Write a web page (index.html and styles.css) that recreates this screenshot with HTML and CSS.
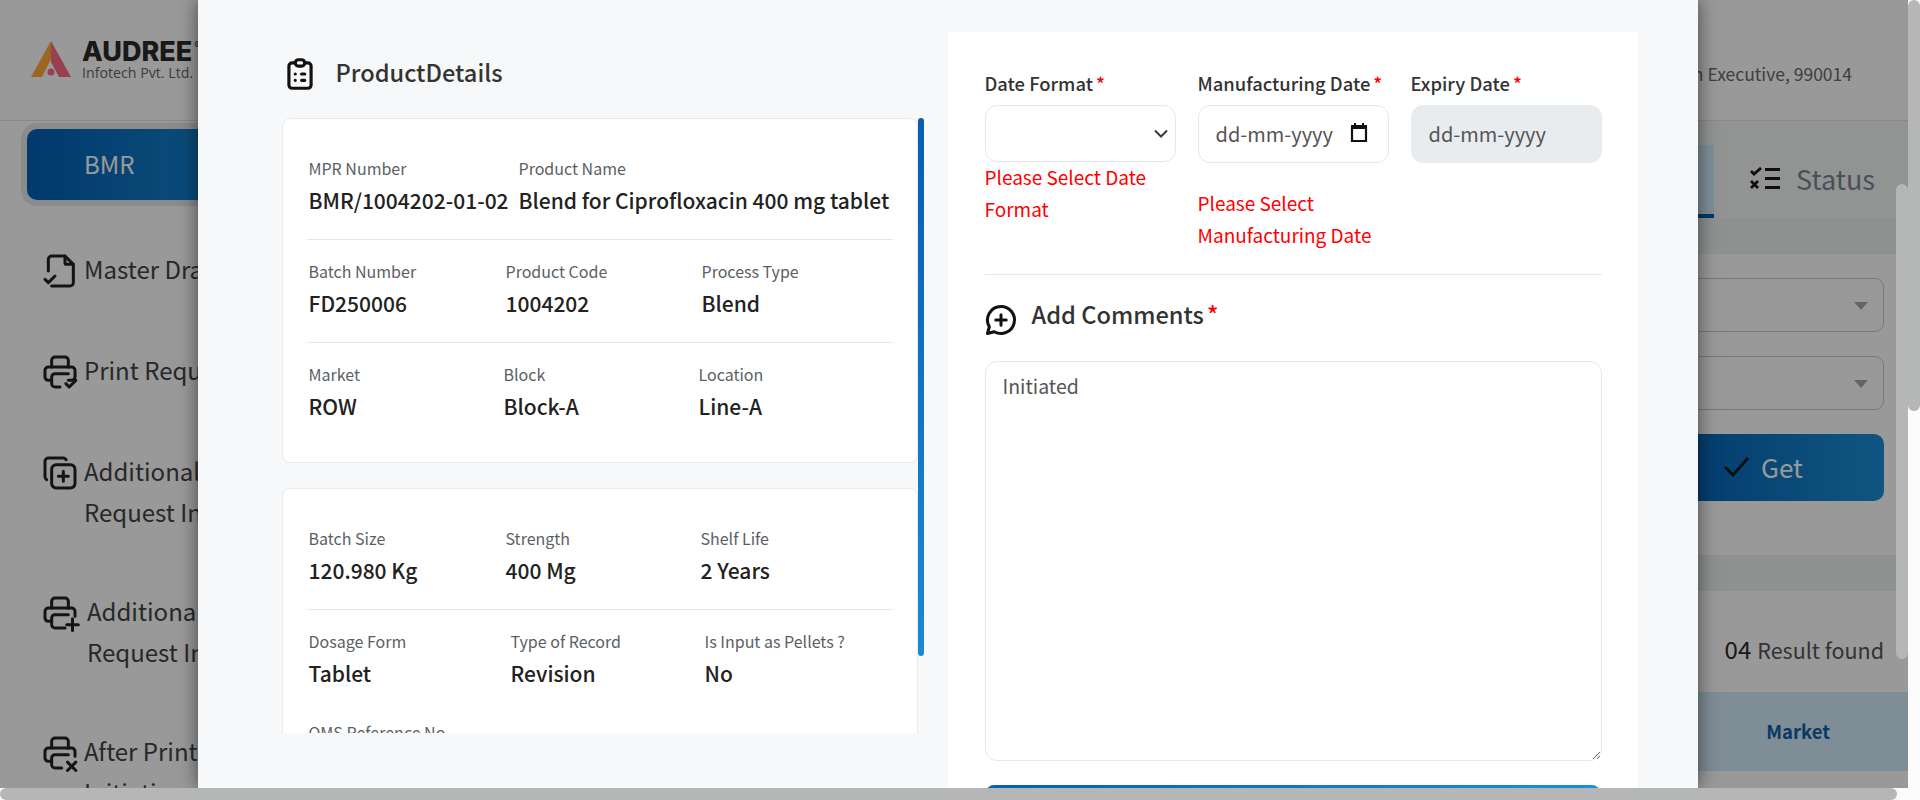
FILE: index.html
```html
<!DOCTYPE html>
<html lang="en">
<head>
  <meta charset="UTF-8">
  <meta name="viewport" content="width=device-width, initial-scale=1.0">
  <title>ProductDetails</title>
  <link rel="stylesheet" href="styles.css">
</head>
<body>
  <div class="page">
    <header class="topbar">
      <div class="logo">
        <svg class="logo-mark" width="42" height="38" viewBox="0 0 42 38">
          <polygon points="21,0 41,36 29,36 21,21" fill="#ff6c85"/>
          <polygon points="21,0 1,36 12,36 21,18" fill="#ffaa3c"/>
          <circle cx="21" cy="31" r="3.500" fill="#ff6c85"/>
        </svg>
        <div class="logo-text">
          <span class="logo-name">AUDREE<sup>®</sup></span>
          <span class="logo-sub">Infotech Pvt. Ltd.</span>
        </div>
      </div>
      <div class="user">Production Executive, 990014</div>
    </header>

    <div class="content">
      <nav class="sidebar">
        <div class="bmr-wrap"><button class="bmr">BMR</button></div>
        <div class="side-item">
          <svg class="side-icon" viewBox="0 0 24 24"><path d="M5 12V5a2 2 0 0 1 2-2h8l5 5v11a2 2 0 0 1-2 2H7"/><path d="M15 3v4a1 1 0 0 0 1 1h4"/><path d="M3 17l2 2 4-4"/></svg>
          <span>Master Draft</span>
        </div>
        <div class="side-item">
          <svg class="side-icon" viewBox="0 0 24 24"><path d="M17 17h2a2 2 0 0 0 2-2v-4a2 2 0 0 0-2-2H5a2 2 0 0 0-2 2v4a2 2 0 0 0 2 2h2"/><path d="M17 9V5a2 2 0 0 0-2-2H9a2 2 0 0 0-2 2v4"/><path d="M12 21H9a2 2 0 0 1-2-2v-4a2 2 0 0 1 2-2h8"/><path d="M15.500 19l2 2 4-4"/></svg>
          <span>Print Request</span>
        </div>
        <div class="side-item two-line">
          <svg class="side-icon" viewBox="0 0 24 24"><path d="M7 9.700A2.700 2.700 0 0 1 9.700 7h8.600A2.700 2.700 0 0 1 21 9.700v8.600a2.700 2.700 0 0 1-2.700 2.700H9.700A2.700 2.700 0 0 1 7 18.300z"/><path d="M4 16a2 2 0 0 1-1-1.700V5a2 2 0 0 1 2-2h9c.8 0 1.200.4 1.700 1"/><path d="M11 14h6M14 11v6"/></svg>
          <span>Additional Print<br>Request Initiation</span>
        </div>
        <div class="side-item two-line shifted">
          <svg class="side-icon" viewBox="0 0 24 24"><path d="M17 9H5a2 2 0 0 0-2 2v4a2 2 0 0 0 2 2h2"/><path d="M17 9h2a2 2 0 0 1 2 2v3"/><path d="M17 9V5a2 2 0 0 0-2-2H9a2 2 0 0 0-2 2v4"/><path d="M15 21H9a2 2 0 0 1-2-2v-4a2 2 0 0 1 2-2h8"/><path d="M16 19h7M19.500 15.500v7"/></svg>
          <span>Additional Print<br>Request Initiation</span>
        </div>
        <div class="side-item two-line">
          <svg class="side-icon" viewBox="0 0 24 24"><path d="M17 9H5a2 2 0 0 0-2 2v4a2 2 0 0 0 2 2h2"/><path d="M17 9h2a2 2 0 0 1 2 2v3"/><path d="M17 9V5a2 2 0 0 0-2-2H9a2 2 0 0 0-2 2v4"/><path d="M13 21H9a2 2 0 0 1-2-2v-4a2 2 0 0 1 2-2h8"/><path d="M16.500 17.500l5 5M21.500 17.500l-5 5"/></svg>
          <span>After Print<br>Initiation</span>
        </div>
      </nav>

      <main class="main">
        <div class="tabs">
          <div class="tab active">Initiation</div>
          <div class="tab">
            <svg class="status-icon" width="30" height="23" viewBox="0 0 30 23"><path d="M1 4l3 3 7-6M1 14l7 7M8 14l-7 7M15 2.500h15M15 11.500h15M15 20.500h15"/></svg>
            <span>Status</span>
          </div>
        </div>
        <div class="band"></div>
        <div class="filters">
          <div class="select-box"><i class="caret"></i></div>
          <div class="select-box"><i class="caret"></i></div>
          <button class="get">
            <svg width="27" height="21" viewBox="0 0 27 21"><path d="M2 11l8 8L25 2"/></svg>
            <span>Get</span>
          </button>
        </div>
        <div class="band"></div>
        <div class="result"><b>04</b> Result found</div>
        <div class="table-head"><span>Market</span></div>
      </main>
    </div>

    <div class="backdrop"></div>

    <section class="modal">
      <div class="details">
        <h2 class="details-title">
          <svg width="38" height="38" viewBox="0 0 24 24"><path d="M9 5H7a2 2 0 0 0-2 2v12a2 2 0 0 0 2 2h10a2 2 0 0 0 2-2V7a2 2 0 0 0-2-2h-2"/><path d="M9 5a2 2 0 0 1 2-2h2a2 2 0 0 1 2 2 2 2 0 0 1-2 2h-2a2 2 0 0 1-2-2z"/><path d="M9 12h.01M13 12h2M9 16h.01M13 16h2"/></svg>
          <span>ProductDetails</span>
        </h2>
        <div class="scroll-area">
          <div class="thumb"></div>
          <div class="card">
            <div class="row row-first">
              <div class="cell"><label>MPR Number</label><strong>BMR/1004202-01-02</strong></div>
              <div class="cell"><label>Product Name</label><strong>Blend for Ciprofloxacin 400 mg tablet</strong></div>
            </div>
            <div class="row cols-a">
              <div class="cell"><label>Batch Number</label><strong>FD250006</strong></div>
              <div class="cell"><label>Product Code</label><strong>1004202</strong></div>
              <div class="cell"><label>Process Type</label><strong>Blend</strong></div>
            </div>
            <div class="row cols-b no-line">
              <div class="cell"><label>Market</label><strong>ROW</strong></div>
              <div class="cell"><label>Block</label><strong>Block-A</strong></div>
              <div class="cell"><label>Location</label><strong>Line-A</strong></div>
            </div>
          </div>
          <div class="card">
            <div class="row cols-c">
              <div class="cell"><label>Batch Size</label><strong>120.980 Kg</strong></div>
              <div class="cell"><label>Strength</label><strong>400 Mg</strong></div>
              <div class="cell"><label>Shelf Life</label><strong>2 Years</strong></div>
            </div>
            <div class="row cols-d no-line row-short">
              <div class="cell"><label>Dosage Form</label><strong>Tablet</strong></div>
              <div class="cell"><label>Type of Record</label><strong>Revision</strong></div>
              <div class="cell"><label>Is Input as Pellets ?</label><strong>No</strong></div>
            </div>
            <div class="row no-line">
              <div class="cell"><label>QMS Reference No</label><strong>NA</strong></div>
            </div>
          </div>
        </div>
      </div>

      <div class="panel">
        <div class="date-grid">
          <div class="field">
            <label>Date Format<em>*</em></label>
            <select class="control"><option></option></select>
            <p class="error error-near">Please Select Date Format</p>
          </div>
          <div class="field">
            <label>Manufacturing Date<em>*</em></label>
            <div class="control date-box">
              <span>dd-mm-yyyy</span>
              <svg width="18" height="20" viewBox="0 0 18 20"><path d="M2 5h14v13H2z" fill="none" stroke="#111" stroke-width="2.200"/><path d="M1 2h16v4H1zM4 0h2v3H4zM12 0h2v3h-2z" fill="#111"/></svg>
            </div>
            <p class="error">Please Select Manufacturing Date</p>
          </div>
          <div class="field">
            <label>Expiry Date<em>*</em></label>
            <div class="control date-box disabled"><span>dd-mm-yyyy</span></div>
          </div>
        </div>
        <div class="comments-title">
          <svg width="36" height="36" viewBox="0 0 24 24"><path d="M12 3a9 9 0 1 1-4.500 16.800L3 21l1.200-4.500A9 9 0 0 1 12 3z"/><path d="M8.500 12h7M12 8.500v7"/></svg>
          <span>Add Comments<em>*</em></span>
        </div>
        <textarea class="comments">Initiated</textarea>
        <button class="submit">Submit</button>
      </div>
    </section>

    <div class="bar-inner"></div>
  </div>
  <div class="bar-right"></div>
  <div class="bar-bottom"></div>
</body>
</html>
```
FILE: styles.css
```css
* {
  margin: 0;
  padding: 0;
  box-sizing: border-box;
}

:root {
  --brand: linear-gradient(90deg, #0360b5, #1b8fd8);
  --thumb: #b5b7b6;
}

html, body {
  height: 800px;
  overflow: hidden;
}

body {
  position: relative;
  background: #fbfbfb;
  font-family: "Noto Sans CJK JP", "Noto Sans", sans-serif;
  color: #444;
}

button {
  font: inherit;
  border: 0;
}

.page {
  position: relative;
  width: 1908px;
  height: 788px;
  overflow: hidden;
  background: #fff;
}

/* page behind the dialog */
.topbar {
  display: flex;
  align-items: center;
  justify-content: space-between;
  height: 121px;
  padding: 0 56px 0 30px;
  border-bottom: 1px solid #e4e4e4;
}

.logo {
  display: flex;
  align-items: center;
  gap: 10px;
}

.logo-text {
  display: flex;
  flex-direction: column;
  font-family: Inter, sans-serif;
}

.logo-name {
  font-size: 27px;
  line-height: 26px;
  font-weight: 800;
  color: #2a2a2a;
}

.logo-name sup {
  margin-left: 2px;
  font-size: 10px;
  font-weight: 400;
  line-height: 0;
  vertical-align: 12px;
}

.logo-sub {
  font-family: "Open Sans", sans-serif;
  font-size: 14.200px;
  line-height: 16px;
  color: #666;
}

.user {
  margin-top: 26px;
  font-size: 17.500px;
  color: #6a6a6a;
}

.content {
  display: flex;
}

.sidebar {
  flex: none;
  width: 330px;
  padding: 8px 0 0 27px;
}

.bmr-wrap {
  width: 260px;
  margin-bottom: 49px;
}

.bmr {
  display: block;
  width: 100%;
  height: 71px;
  padding: 0 0 2px 57px;
  border-radius: 10px;
  background: var(--brand);
  box-shadow: 0 0 0 6px #e6e8ec;
  color: #fff;
  font-size: 24px;
  text-align: left;
}

.side-item {
  display: flex;
  align-items: flex-start;
  gap: 10px;
  margin-bottom: 59px;
  font-size: 24px;
  line-height: 40px;
  color: #444;
}

.side-item.two-line {
  line-height: 40.500px;
}

.side-item.shifted span {
  margin-left: 3px;
}

.side-icon {
  flex: none;
  width: 40px;
  height: 40px;
  margin: 2px -6px 0 13px;
  fill: none;
  stroke: #222;
  stroke-width: 1.800;
  stroke-linecap: round;
  stroke-linejoin: round;
}

.main {
  flex: 1;
  min-width: 0;
}

.tabs {
  display: flex;
  justify-content: flex-end;
  height: 97px;
  padding-top: 24px;
  background: #f3f5f5;
}

.tab {
  display: flex;
  align-items: center;
  gap: 16px;
  height: 73px;
  padding: 0 33px 6px 36px;
  font-size: 27px;
  color: #7b8591;
}

.tab.active {
  justify-content: center;
  width: 300px;
  background: #d2eeff;
  border-bottom: 4px solid #0360b5;
  color: #0360b5;
}

.status-icon path {
  fill: none;
  stroke: #1a1a1a;
  stroke-width: 2.800;
}

.band {
  height: 36px;
  background: #eef0f0;
}

.filters {
  display: flex;
  flex-direction: column;
  align-items: flex-end;
  gap: 24px;
  padding: 24px 24px 54px 0;
}

.select-box {
  position: relative;
  width: 1000px;
  height: 54px;
  border: 1px solid #c8c8c8;
  border-radius: 9px;
}

.caret {
  position: absolute;
  right: 15px;
  top: 23px;
  border: 7px solid transparent;
  border-top: 8px solid #a8a8a8;
  border-bottom: 0;
}

.get {
  display: flex;
  align-items: center;
  justify-content: center;
  gap: 11px;
  width: 242px;
  height: 67px;
  padding-bottom: 3px;
  border-radius: 10px;
  background: linear-gradient(90deg, #0360b5 10%, #1b8fd8);
  color: #fff;
  font-size: 26px;
}

.get svg path {
  fill: none;
  stroke: #1a1a1a;
  stroke-width: 3;
}

.result {
  display: flex;
  align-items: baseline;
  justify-content: flex-end;
  gap: 6px;
  height: 101px;
  padding: 40px 24px 0 0;
  font-size: 21.500px;
  line-height: 36px;
  color: #555;
}

.result b {
  font-size: 24px;
  font-weight: 400;
  color: #2a2a2a;
}

.table-head {
  display: flex;
  align-items: center;
  justify-content: flex-end;
  height: 79px;
  padding: 0 78px 2px 0;
  background: #d4ebfa;
  font-size: 18.500px;
  font-weight: 700;
  color: #0f5fa8;
}

.backdrop {
  position: absolute;
  inset: 0;
  background: rgba(0, 0, 0, .4);
}

/* dialog */
.modal {
  position: absolute;
  left: 198px;
  top: 0;
  display: flex;
  gap: 24px;
  width: 1500px;
  height: 788px;
  padding: 32px 60px 0 84px;
  overflow: hidden;
  background: #f7f8fa;
  box-shadow: 0 0 18px rgba(0, 0, 0, .55);
}

.details {
  flex: none;
  width: 642px;
}

.details-title {
  display: flex;
  align-items: center;
  gap: 16.500px;
  height: 86px;
  margin-left: -1px;
  padding-bottom: 6px;
  font-size: 23.600px;
  font-weight: 500;
  color: #333;
}

.details-title svg {
  margin-top: 4px;
}

.details-title svg, .comments-title svg {
  flex: none;
  fill: none;
  stroke: #111;
  stroke-width: 2;
  stroke-linecap: round;
  stroke-linejoin: round;
}

.scroll-area {
  position: relative;
  height: 615px;
  padding-right: 6px;
  overflow: hidden;
}

.thumb {
  position: absolute;
  right: 0;
  top: 0;
  width: 6px;
  height: 538px;
  border-radius: 3px;
  background: linear-gradient(180deg, #0a5cb0, #1a8ad4);
}

.card {
  margin-bottom: 25px;
  padding: 18px 24px 16px 24px;
  background: #fff;
  border: 1px solid #e9ebef;
  border-radius: 8px;
}

.row {
  display: grid;
  height: 103px;
  padding: 18px 0 0 1.500px;
  border-bottom: 1px solid #e6e7ea;
}

.row.no-line {
  border-bottom: 0;
}

.row.row-short {
  height: 91px;
}

.row-first {
  grid-template-columns: 210px 1fr;
}

.cols-a {
  grid-template-columns: 197px 196px 1fr;
}

.cols-b {
  grid-template-columns: 195px 195px 1fr;
}

.cols-c {
  grid-template-columns: 197px 195px 1fr;
}

.cols-d {
  grid-template-columns: 202px 194px 1fr;
}

.cell label {
  display: block;
  font-size: 16px;
  line-height: 26px;
  color: #5a5f66;
}

.cell strong {
  display: block;
  margin-top: 2px;
  font-size: 21px;
  line-height: 34px;
  font-weight: 500;
  color: #222;
  white-space: nowrap;
}

.panel {
  flex: none;
  width: 690px;
  height: 790px;
  padding: 32px 36.500px 0;
  background: #fff;
}

.date-grid {
  display: grid;
  grid-template-columns: repeat(3, 191px);
  column-gap: 22px;
  height: 211px;
  border-bottom: 1px solid #e6e8ee;
}

.field label {
  display: block;
  height: 41px;
  font-size: 18.400px;
  line-height: 38px;
  font-weight: 500;
  color: #333;
  white-space: nowrap;
}

em {
  margin-left: 3px;
  font-style: normal;
  color: #f00;
}

.control {
  display: block;
  width: 100%;
  height: 58px;
  background: #fff;
  border: 1px solid #e6e8ee;
  border-radius: 12px;
  font: inherit;
  font-size: 20px;
  color: #555;
}

select.control {
  height: 57px;
  appearance: none;
  background: #fff url("data:image/svg+xml,%3Csvg xmlns='http://www.w3.org/2000/svg' viewBox='0 0 16 12'%3E%3Cpath d='M2 2.500l6 6 6-6' fill='none' stroke='%23343a40' stroke-width='2'/%3E%3C/svg%3E") no-repeat right 6px center / 16px 12px;
}

.date-box {
  display: flex;
  align-items: center;
  justify-content: space-between;
  padding: 0 20px 2px 17px;
}

.date-box.disabled {
  background: #e9ecef;
  border-color: #e9ecef;
}

.error {
  margin-top: 24px;
  font-size: 19px;
  line-height: 31.500px;
  color: #f00;
}

.error-near {
  margin-top: -1px;
}

.comments-title {
  display: flex;
  align-items: center;
  gap: 13px;
  height: 86px;
  margin-left: -2px;
  padding-bottom: 8px;
  font-size: 23.600px;
  font-weight: 500;
  color: #333;
}

.comments-title svg {
  margin-top: 11px;
}

.comments {
  display: block;
  width: 100%;
  height: 400px;
  padding: 7px 17px;
  border: 1px solid #e6e8ee;
  border-radius: 12px;
  font: inherit;
  font-size: 19.500px;
  line-height: 34px;
  color: #555;
  outline: 0;
}

.submit {
  display: block;
  width: 614px;
  height: 60px;
  margin: 24px 0 0 1px;
  border-radius: 8px;
  background: var(--brand);
  color: #fff;
  font-size: 24px;
}

/* scrollbars */
.bar-inner {
  position: absolute;
  right: 0;
  top: 184px;
  width: 12px;
  height: 475px;
  border-radius: 6px;
  background: var(--thumb);
}

.bar-right {
  position: absolute;
  right: 0;
  top: 0;
  width: 12px;
  height: 411px;
  border-radius: 6px;
  background: var(--thumb);
}

.bar-bottom {
  position: absolute;
  left: 0;
  bottom: 0;
  width: 1897px;
  height: 12px;
  border-radius: 6px;
  background: var(--thumb);
}
```
